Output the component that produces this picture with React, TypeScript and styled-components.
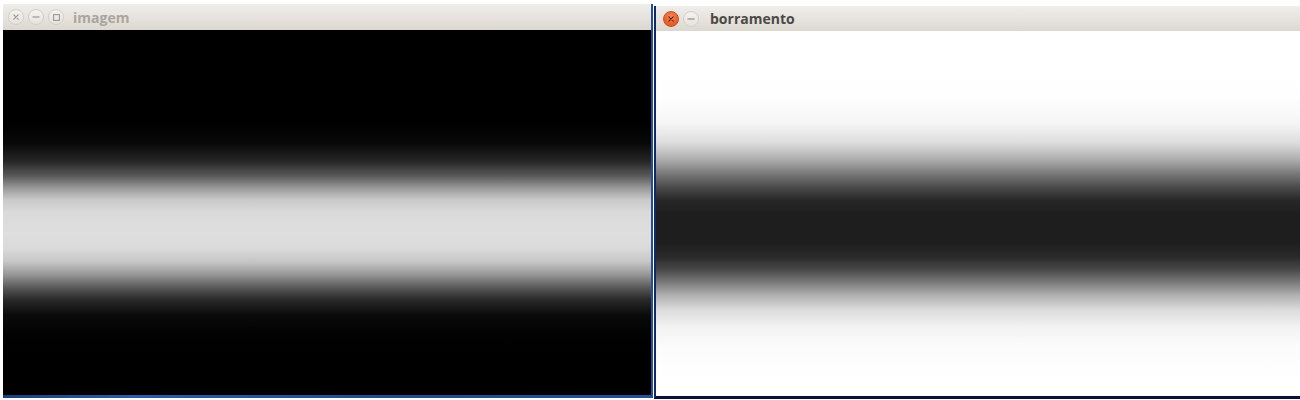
import React from 'react';
import styled, { createGlobalStyle } from 'styled-components';

const GlobalStyle = createGlobalStyle`
  html, body {
    margin: 0;
    padding: 0;
    background: #ffffff;
    overflow: hidden;
  }
  body {
    font-family: "Open Sans", "DejaVu Sans", sans-serif;
  }
`;

const Desktop = styled.div`
  display: flex;
  align-items: flex-start;
  width: 1300px;
  height: 400px;
  padding-left: 3px;
  box-sizing: border-box;
  gap: 1px;
`;

const Window = styled.div<{ $top: number; $width: number }>`
  display: flex;
  flex-direction: column;
  margin-top: ${(p) => p.$top}px;
  width: ${(p) => p.$width}px;
  flex-shrink: 0;
`;

const LeftFrame = styled.div`
  display: flex;
  flex-direction: column;
  border-right: 2px solid #2b66b8;
  border-bottom: 3px solid #1f4f95;
  border-image: linear-gradient(90deg, #1b3f7c 0%, #2a5ea8 20%, #1f4c90 60%, #244f97 100%) 1;
  border-top: none;
  border-left: none;
`;

const RightFrame = styled.div`
  display: flex;
  flex-direction: column;
  border-left: 2px solid #13286b;
  border-bottom: 3px solid #0b1134;
`;

const TitleBar = styled.div<{ $height: number; $pad: number }>`
  display: flex;
  align-items: center;
  height: ${(p) => p.$height}px;
  padding-left: ${(p) => p.$pad}px;
  background: linear-gradient(180deg, #f0eeea 0%, #e6e2dd 55%, #dcd7d0 100%);
`;

const Controls = styled.div`
  display: flex;
  align-items: center;
  gap: 4px;
`;

const WinButton = styled.div<{ $variant: 'idle' | 'close' }>`
  width: 16px;
  height: 16px;
  border-radius: 50%;
  display: flex;
  align-items: center;
  justify-content: center;
  box-sizing: border-box;
  background: ${(p) =>
    p.$variant === 'close'
      ? 'radial-gradient(circle at 50% 35%, #f48a5c 0%, #ea6432 55%, #d9501f 100%)'
      : 'linear-gradient(180deg, #f4f2ef 0%, #e6e3df 100%)'};
  border: 1px solid ${(p) => (p.$variant === 'close' ? '#c9521f' : '#d2cec8')};
`;

const Title = styled.span<{ $active?: boolean; $gap: number }>`
  margin-left: ${(p) => p.$gap}px;
  font-size: 14px;
  font-weight: 700;
  color: ${(p) => (p.$active ? '#4a4a47' : '#aaa59e')};
`;

const Picture = styled.div<{ $tone: 'light' | 'dark' }>`
  height: 365px;
  background: ${(p) =>
    p.$tone === 'light'
      ? `linear-gradient(180deg,
          #000 0%, #000 25%, #080808 31%, #262626 36%, #5a5a5a 40%,
          #9c9c9c 43.5%, #c9c9c9 46.5%, #dadada 50%, #dedede 56%,
          #dadada 60%, #c6c6c6 63.5%, #979797 67%, #5a5a5a 70.5%,
          #282828 74%, #0b0b0b 78%, #020202 83%, #000 90%, #000 100%)`
      : `linear-gradient(180deg,
          #fff 0%, #fefefe 18%, #f6f6f6 25%, #dedede 30.5%, #b0b0b0 35%,
          #7a7a7a 39%, #484848 43%, #272727 46.5%, #1e1e1e 50%,
          #1e1e1e 58%, #2a2a2a 62%, #4a4a4a 65.5%, #7c7c7c 69%,
          #b2b2b2 72.5%, #dcdcdc 76.5%, #f2f2f2 81%, #fbfbfb 86%, #fefefe 93%, #fff 100%)`};
`;

const CloseIcon = ({ color }: { color: string }) => (
  <svg width="6" height="6" viewBox="0 0 6 6">
    <path d="M0.8 0.8 L5.2 5.2 M5.2 0.8 L0.8 5.2" stroke={color} strokeWidth="1.2" strokeLinecap="round" />
  </svg>
);

const MinIcon = ({ color }: { color: string }) => (
  <svg width="8" height="2" viewBox="0 0 8 2">
    <path d="M0.5 1 L7.5 1" stroke={color} strokeWidth="1.2" />
  </svg>
);

const MaxIcon = ({ color }: { color: string }) => (
  <svg width="7" height="7" viewBox="0 0 7 7">
    <rect x="0.6" y="0.6" width="5.8" height="5.8" fill="none" stroke={color} strokeWidth="1.1" />
  </svg>
);

export default function App() {
  return (
    <>
      <GlobalStyle />
      <Desktop>
        <Window $top={4} $width={650}>
          <LeftFrame>
            <TitleBar $height={26} $pad={5}>
              <Controls>
                <WinButton $variant="idle">
                  <CloseIcon color="#9b9892" />
                </WinButton>
                <WinButton $variant="idle">
                  <MinIcon color="#9b9892" />
                </WinButton>
                <WinButton $variant="idle">
                  <MaxIcon color="#9b9892" />
                </WinButton>
              </Controls>
              <Title $gap={9}>imagem</Title>
            </TitleBar>
            <Picture $tone="light" />
          </LeftFrame>
        </Window>
        <Window $top={6} $width={646}>
          <RightFrame>
            <TitleBar $height={25} $pad={7}>
              <Controls>
                <WinButton $variant="close">
                  <CloseIcon color="#6a2810" />
                </WinButton>
                <WinButton $variant="idle">
                  <MinIcon color="#8f8b85" />
                </WinButton>
              </Controls>
              <Title $active $gap={11}>borramento</Title>
            </TitleBar>
            <Picture $tone="dark" />
          </RightFrame>
        </Window>
      </Desktop>
    </>
  );
}
